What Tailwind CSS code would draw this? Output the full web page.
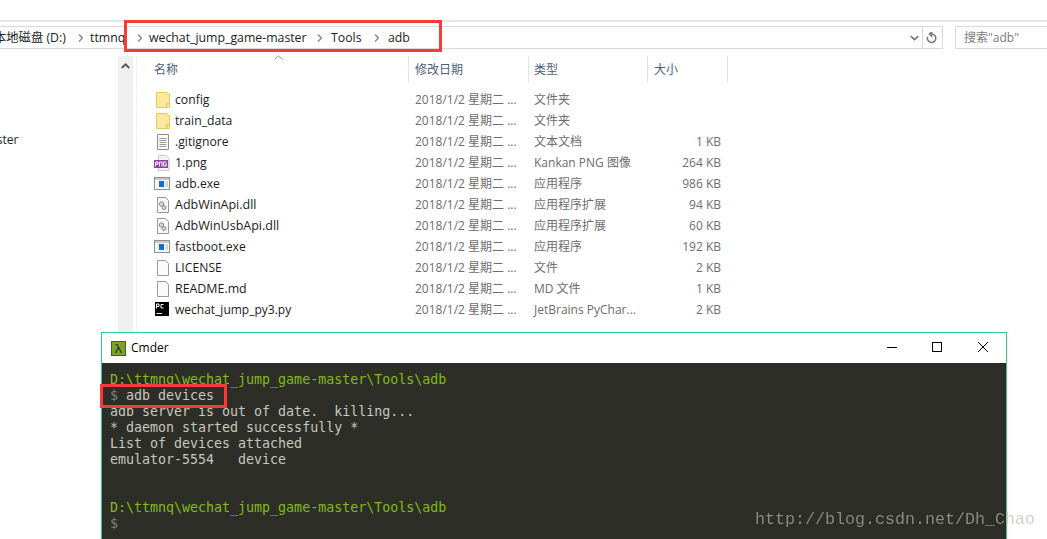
<!DOCTYPE html>
<html>
<head>
<meta charset="utf-8">
<script src="https://cdn.jsdelivr.net/npm/@tailwindcss/browser@4"></script>
</head>
<body class="bg-white">
<div class="relative w-[1047px] h-[539px] overflow-hidden bg-white font-['Open_Sans','Noto_Sans_CJK_SC',sans-serif] text-[12px] text-[#1c1c1c]">
  <div class="h-[20px]"></div>
  <div class="h-[2px] bg-[#e6e6e6]"></div>
  <div class="h-[4px]"></div>
  <!-- address row -->
  <div class="flex h-[23px]">
    <div class="w-[943px] shrink-0 flex border-y border-r border-[#d9d9d9] leading-[21px]">
      <div class="flex-1 flex items-center whitespace-nowrap overflow-hidden relative text-[12.3px]">
        <span class="ml-[-6px] w-[84px] shrink-0">本地磁盘 (D:)</span>
        <svg class="w-[5px] h-[8px] mr-[7px] shrink-0" viewBox="0 0 5 8"><path d="M1 0.5 L4.5 4 L1 7.5" fill="none" stroke="#8a8a8a" stroke-width="1.5"/></svg>
        <span class="w-[42px] shrink-0">ttmnq</span>
        <svg class="w-[5px] h-[8px] mr-[7px] ml-[5px] shrink-0" viewBox="0 0 5 8"><path d="M1 0.5 L4.5 4 L1 7.5" fill="none" stroke="#8a8a8a" stroke-width="1.5"/></svg>
        <span class="w-[158px] shrink-0">wechat_jump_game-master</span>
        <svg class="w-[5px] h-[8px] mr-[9px] ml-[10px] shrink-0" viewBox="0 0 5 8"><path d="M1 0.5 L4.5 4 L1 7.5" fill="none" stroke="#8a8a8a" stroke-width="1.5"/></svg>
        <span class="w-[33px] shrink-0">Tools</span>
        <svg class="w-[5px] h-[8px] mr-[9px] ml-[10px] shrink-0" viewBox="0 0 5 8"><path d="M1 0.5 L4.5 4 L1 7.5" fill="none" stroke="#8a8a8a" stroke-width="1.5"/></svg>
        <span>adb</span>
        <svg class="absolute right-[3px] top-[8px] w-[9px] h-[6px]" viewBox="0 0 9 6"><path d="M0.8 1 L4.5 4.7 L8.2 1" fill="none" stroke="#6a6a6a" stroke-width="1.6"/></svg>
      </div>
      <div class="w-[20px] shrink-0 border-l border-[#d9d9d9] flex items-center justify-center">
        <svg class="w-[11px] h-[12px] mr-[2px]" viewBox="0 0 11 12"><path d="M5.5 2 A4.2 4.2 0 1 1 1.6 4.8 M5.6 0 V4 L3.4 2 Z" fill="none" stroke="#777" stroke-width="1.5"/></svg>
      </div>
    </div>
    <div class="ml-[12px] flex-1 border-y border-l border-[#d9d9d9] pl-[8px] leading-[21px] text-[#7a7a7a]">搜索"adb"</div>
  </div>
  <!-- explorer body -->
  <div class="flex mt-[7px] h-[300px]">
    <div class="w-[118px] shrink-0 pt-[72px] relative overflow-hidden">
      <span class="ml-[-21px] leading-[24px]">master</span>
    </div>
    <div class="w-[15px] shrink-0 bg-[#f0f0f0] h-[300px] pt-[7px] flex justify-center">
      <svg class="w-[9px] h-[6px]" viewBox="0 0 9 6"><path d="M0.8 5 L4.5 1.3 L8.2 5" fill="none" stroke="#555" stroke-width="1.8"/></svg>
    </div>
    <div class="w-[3px] shrink-0"></div>
    <div class="w-px shrink-0 bg-[#f2f2f2]"></div>
    <div class="flex-1 min-w-0">
      <!-- header -->
      <div class="relative grid grid-cols-[272px_120px_119px_80px] h-[27px] text-[#4c607a] leading-[27px]">
        <div class="pl-[17px] border-r border-[#e3e3e3]">名称</div>
        <div class="pl-[6px] border-r border-[#e3e3e3]">修改日期</div>
        <div class="pl-[5px] border-r border-[#e3e3e3]">类型</div>
        <div class="pl-[6px] border-r border-[#e3e3e3]">大小</div>
        <svg class="absolute left-[137px] top-[-1px] w-[9px] h-[5px]" viewBox="0 0 9 5"><path d="M0.5 4.5 L4.5 0.8 L8.5 4.5" fill="none" stroke="#9a9a9a" stroke-width="1"/></svg>
      </div>
      <!-- rows -->
      <div class="pt-[6px] leading-[21px]">
        <div class="grid grid-cols-[273px_119px_119px_73px] h-[21px]">
          <div class="flex items-center pl-[19px] gap-[5px]"><svg class="w-[14px] h-[16px] shrink-0" viewBox="0 0 14 16"><path d="M0.5 0.5 H11 V2 H13.5 V15.5 H0.5 Z" fill="#ffe9a1" stroke="#e9c95f"/><path d="M10.5 15.5 V11.5 H13.5" fill="#f7d774" stroke="#e9c95f"/></svg><span class="text-[12.2px]">config</span></div>
          <div class="pl-[5px] text-[#6d6d6d]">2018/1/2 星期二 ...</div><div class="pl-[5px] text-[#6d6d6d]">文件夹</div><div class="text-right text-[#6d6d6d]"></div>
        </div>
        <div class="grid grid-cols-[273px_119px_119px_73px] h-[21px]">
          <div class="flex items-center pl-[19px] gap-[5px]"><svg class="w-[14px] h-[16px] shrink-0" viewBox="0 0 14 16"><path d="M0.5 0.5 H11 V2 H13.5 V15.5 H0.5 Z" fill="#ffe9a1" stroke="#e9c95f"/><path d="M10.5 15.5 V11.5 H13.5" fill="#f7d774" stroke="#e9c95f"/></svg><span class="text-[12.2px]">train_data</span></div>
          <div class="pl-[5px] text-[#6d6d6d]">2018/1/2 星期二 ...</div><div class="pl-[5px] text-[#6d6d6d]">文件夹</div><div class="text-right text-[#6d6d6d]"></div>
        </div>
        <div class="grid grid-cols-[273px_119px_119px_73px] h-[21px]">
          <div class="flex items-center pl-[19px] gap-[5px]"><svg class="w-[14px] h-[16px] shrink-0" viewBox="0 0 14 16"><path d="M1.5 0.5 H12.5 V15.5 H1.5 Z" fill="#fafafa" stroke="#8f8f8f"/><path d="M3.5 4.5 H10.5 M3.5 6.5 H10.5 M3.5 8.5 H10.5 M3.5 10.5 H10.5 M3.5 12.5 H10.5" stroke="#9a9a9a"/></svg><span class="text-[12.2px]">.gitignore</span></div>
          <div class="pl-[5px] text-[#6d6d6d]">2018/1/2 星期二 ...</div><div class="pl-[5px] text-[#6d6d6d]">文本文档</div><div class="text-right text-[#6d6d6d]">1 KB</div>
        </div>
        <div class="grid grid-cols-[273px_119px_119px_73px] h-[21px]">
          <div class="flex items-center pl-[17px] gap-[5px]"><svg class="w-[16px] h-[16px] shrink-0" viewBox="0 0 16 16"><path d="M4.5 0.5 H12 L15 3.5 V15.5 H4.5 Z" fill="#f5f5f5" stroke="#c8c8c8"/><rect x="0" y="5" width="14" height="8" fill="#8b3fa8"/><path d="M1.5 11.5 V7 H4 V9.2 H1.5 M5.5 11.5 V7 H8 V11.5 M9.5 7 H12.5 M9.5 7 V11 H12.5 V9.2 H11" fill="none" stroke="#fff" stroke-width="1"/></svg><span class="text-[12.2px]">1.png</span></div>
          <div class="pl-[5px] text-[#6d6d6d]">2018/1/2 星期二 ...</div><div class="pl-[5px] text-[#6d6d6d]">Kankan PNG 图像</div><div class="text-right text-[#6d6d6d]">264 KB</div>
        </div>
        <div class="grid grid-cols-[273px_119px_119px_73px] h-[21px]">
          <div class="flex items-center pl-[17px] gap-[5px]"><svg class="w-[16px] h-[13px] shrink-0" viewBox="0 0 16 13"><rect x="0.5" y="0.5" width="15" height="12" fill="#f8f8f8" stroke="#8f8f8f"/><rect x="1" y="1" width="14" height="2" fill="#c9c9c9"/><rect x="5" y="4" width="5" height="6" fill="#0b6fd6"/><path d="M11.5 5 H14 M11.5 7 H14 M11.5 9 H14" stroke="#b0b0b0"/></svg><span class="text-[12.2px]">adb.exe</span></div>
          <div class="pl-[5px] text-[#6d6d6d]">2018/1/2 星期二 ...</div><div class="pl-[5px] text-[#6d6d6d]">应用程序</div><div class="text-right text-[#6d6d6d]">986 KB</div>
        </div>
        <div class="grid grid-cols-[273px_119px_119px_73px] h-[21px]">
          <div class="flex items-center pl-[19px] gap-[5px]"><svg class="w-[14px] h-[16px] shrink-0" viewBox="0 0 14 16"><path d="M1.5 0.5 H9.5 L12.5 3.5 V15.5 H1.5 Z" fill="#f7f7f7" stroke="#9a9a9a"/><circle cx="5.5" cy="7" r="2.2" fill="#d5d5d5" stroke="#8f8f8f"/><circle cx="8" cy="10.5" r="2" fill="#c9d6e6" stroke="#7f8fa5"/></svg><span class="text-[12.5px]">AdbWinApi.dll</span></div>
          <div class="pl-[5px] text-[#6d6d6d]">2018/1/2 星期二 ...</div><div class="pl-[5px] text-[#6d6d6d]">应用程序扩展</div><div class="text-right text-[#6d6d6d]">94 KB</div>
        </div>
        <div class="grid grid-cols-[273px_119px_119px_73px] h-[21px]">
          <div class="flex items-center pl-[19px] gap-[5px]"><svg class="w-[14px] h-[16px] shrink-0" viewBox="0 0 14 16"><path d="M1.5 0.5 H9.5 L12.5 3.5 V15.5 H1.5 Z" fill="#f7f7f7" stroke="#9a9a9a"/><circle cx="5.5" cy="7" r="2.2" fill="#d5d5d5" stroke="#8f8f8f"/><circle cx="8" cy="10.5" r="2" fill="#c9d6e6" stroke="#7f8fa5"/></svg><span class="text-[12.5px]">AdbWinUsbApi.dll</span></div>
          <div class="pl-[5px] text-[#6d6d6d]">2018/1/2 星期二 ...</div><div class="pl-[5px] text-[#6d6d6d]">应用程序扩展</div><div class="text-right text-[#6d6d6d]">60 KB</div>
        </div>
        <div class="grid grid-cols-[273px_119px_119px_73px] h-[21px]">
          <div class="flex items-center pl-[17px] gap-[5px]"><svg class="w-[16px] h-[13px] shrink-0" viewBox="0 0 16 13"><rect x="0.5" y="0.5" width="15" height="12" fill="#f8f8f8" stroke="#8f8f8f"/><rect x="1" y="1" width="14" height="2" fill="#c9c9c9"/><rect x="5" y="4" width="5" height="6" fill="#0b6fd6"/><path d="M11.5 5 H14 M11.5 7 H14 M11.5 9 H14" stroke="#b0b0b0"/></svg><span class="text-[12.2px]">fastboot.exe</span></div>
          <div class="pl-[5px] text-[#6d6d6d]">2018/1/2 星期二 ...</div><div class="pl-[5px] text-[#6d6d6d]">应用程序</div><div class="text-right text-[#6d6d6d]">192 KB</div>
        </div>
        <div class="grid grid-cols-[273px_119px_119px_73px] h-[21px]">
          <div class="flex items-center pl-[19px] gap-[5px]"><svg class="w-[14px] h-[16px] shrink-0" viewBox="0 0 14 16"><path d="M1.5 0.5 H9.5 L12.5 3.5 V15.5 H1.5 Z" fill="#fbfbfb" stroke="#9a9a9a"/></svg><span class="text-[12.2px]">LICENSE</span></div>
          <div class="pl-[5px] text-[#6d6d6d]">2018/1/2 星期二 ...</div><div class="pl-[5px] text-[#6d6d6d]">文件</div><div class="text-right text-[#6d6d6d]">2 KB</div>
        </div>
        <div class="grid grid-cols-[273px_119px_119px_73px] h-[21px]">
          <div class="flex items-center pl-[19px] gap-[5px]"><svg class="w-[14px] h-[16px] shrink-0" viewBox="0 0 14 16"><path d="M1.5 0.5 H9.5 L12.5 3.5 V15.5 H1.5 Z" fill="#fbfbfb" stroke="#9a9a9a"/></svg><span class="text-[12.4px]">README.md</span></div>
          <div class="pl-[5px] text-[#6d6d6d]">2018/1/2 星期二 ...</div><div class="pl-[5px] text-[#6d6d6d]">MD 文件</div><div class="text-right text-[#6d6d6d]">1 KB</div>
        </div>
        <div class="grid grid-cols-[273px_119px_119px_73px] h-[21px]">
          <div class="flex items-center pl-[17px] gap-[5px]"><svg class="w-[16px] h-[15px] shrink-0" viewBox="0 0 16 15"><rect x="1" y="0" width="14" height="14" fill="#000"/><path d="M2.5 6.5 V2 H5 V4.4 H2.5 M9.5 2.5 H7 V6 H9.5" fill="none" stroke="#fff"/><path d="M2.5 11.5 H8" stroke="#fff"/></svg><span>wechat_jump_py3.py</span></div>
          <div class="pl-[5px] text-[#6d6d6d]">2018/1/2 星期二 ...</div><div class="pl-[5px] text-[#6d6d6d]">JetBrains PyChar...</div><div class="text-right text-[#6d6d6d]">2 KB</div>
        </div>
      </div>
    </div>
  </div>

  <!-- red highlight on address -->
  <div class="absolute left-[124px] top-[20px] w-[318px] h-[32px] border-[3px] border-[#f73b3b]"></div>

  <!-- Cmder window -->
  <div class="absolute left-[101px] top-[332px] w-[906px] h-[207px] border-x border-t border-[#2ecb83] flex flex-col">
    <div class="h-[30px] shrink-0 bg-white flex items-center pl-[9px] gap-[5px] relative text-[12px] text-black">
      <svg class="w-[15px] h-[15px] shrink-0" viewBox="0 0 15 15"><rect x="0.5" y="0.5" width="14" height="14" fill="#7ba12a" stroke="#4b5e24"/><path d="M4.5 3.5 H6 L10.5 12 M7.4 6.8 L4.5 12" fill="none" stroke="#23300f" stroke-width="1.2"/></svg>
      <span>Cmder</span>
      <svg class="absolute left-[785px] top-[14px] w-[10px] h-px" viewBox="0 0 10 1"><rect width="10" height="1" fill="#000"/></svg>
      <svg class="absolute left-[830px] top-[9px] w-[10px] h-[10px]" viewBox="0 0 10 10"><rect x="0.5" y="0.5" width="9" height="9" fill="none" stroke="#000"/></svg>
      <svg class="absolute left-[876px] top-[9px] w-[10px] h-[10px]" viewBox="0 0 10 10"><path d="M0 0 L10 10 M10 0 L0 10" stroke="#000" stroke-width="1"/></svg>
    </div>
    <div class="flex-1 bg-[#2d2e28] pl-[8px] pt-[9px] font-['DejaVu_Sans_Mono',monospace] text-[13.3px] leading-[16px] text-[#c5c8c0]">
      <div class="whitespace-pre text-[#82bc16]">D:\ttmnq\wechat_jump_game-master\Tools\adb</div>
      <div class="whitespace-pre"><span class="text-[#7d7f76]">$</span> adb devices</div>
      <div class="whitespace-pre">adb server is out of date.  killing...</div>
      <div class="whitespace-pre">* daemon started successfully *</div>
      <div class="whitespace-pre">List of devices attached</div>
      <div class="whitespace-pre">emulator-5554   device</div>
      <div class="h-[32px]"></div>
      <div class="whitespace-pre text-[#82bc16]">D:\ttmnq\wechat_jump_game-master\Tools\adb</div>
      <div class="whitespace-pre text-[#7d7f76]">$</div>
    </div>
  </div>

  <!-- red highlight on command -->
  <div class="absolute left-[100px] top-[384px] w-[127px] h-[24px] border-[3px] border-[#f73b3b]"></div>

  <!-- watermark -->
  <div class="absolute left-[755px] top-[510px] font-['Liberation_Mono',monospace] text-[16.67px] leading-[20px] whitespace-pre bg-[linear-gradient(to_right,#8c8c82_251px,#cfcfc9_251px)] bg-clip-text text-transparent">http://blog.csdn.net/Dh_Chao</div>
</div>
</body>
</html>
